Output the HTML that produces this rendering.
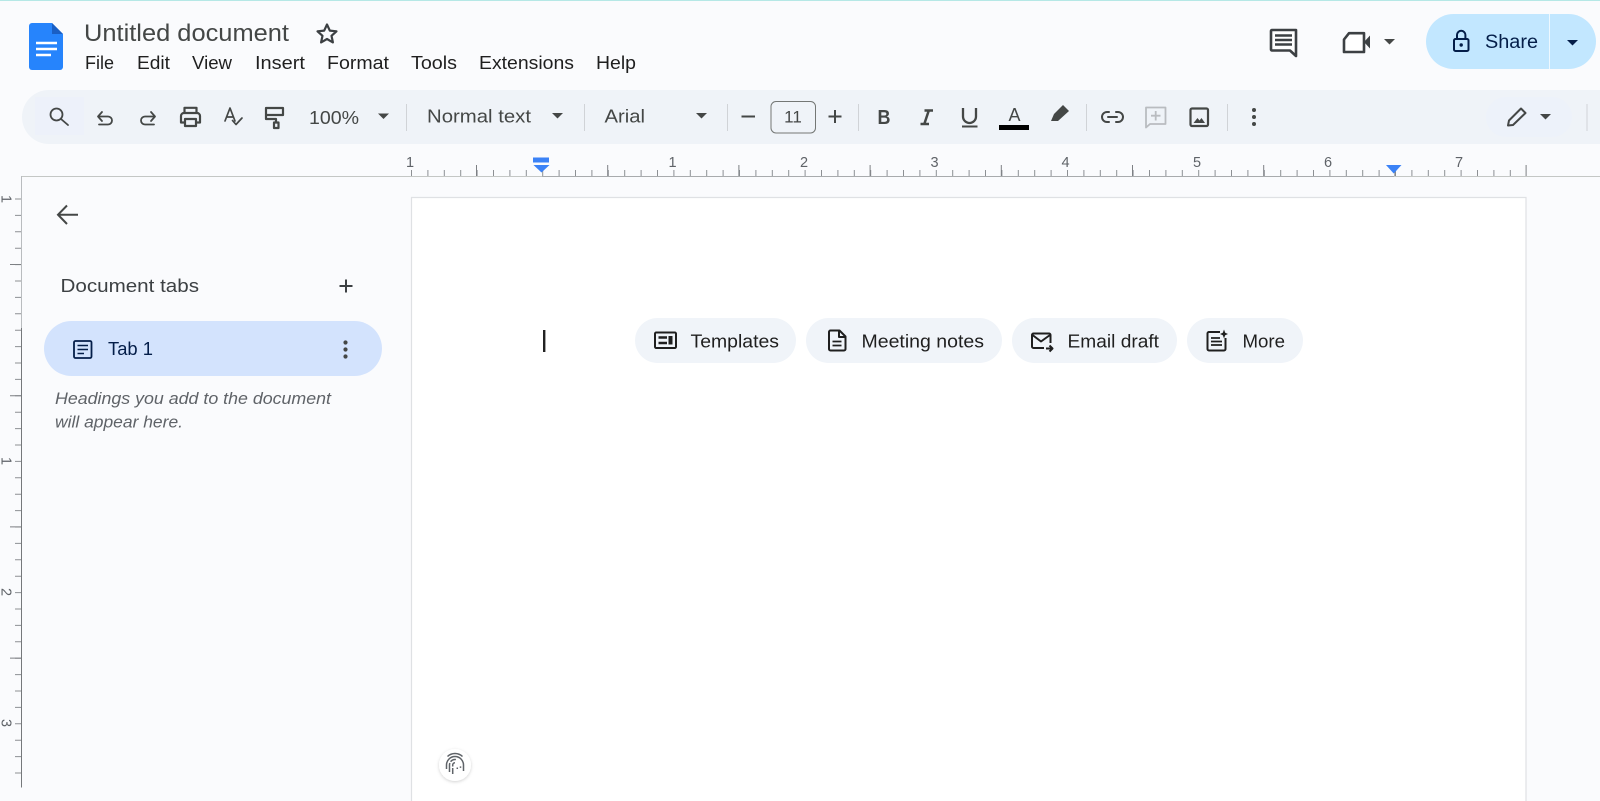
<!DOCTYPE html>
<html lang="en">
<head>
<meta charset="utf-8">
<title>Untitled document</title>
<style>
html,body{margin:0;padding:0;background:#fafbfd;width:1600px;height:801px;overflow:hidden}
svg{display:block;font-family:"Liberation Sans",Arial,sans-serif}
.m{font-size:18px;fill:#1f1f1f}
.t{font-size:18px;fill:#444746}
.c{font-size:18px;fill:#1f1f1f}
.n{font-size:14.5px;fill:#5f6368;text-anchor:middle}
.s{fill:none;stroke:#444746;stroke-width:2;stroke-linecap:round;stroke-linejoin:round}
.k{fill:none;stroke:#1f1f1f;stroke-width:2;stroke-linejoin:round}
.sep{stroke:#d0d3d7;stroke-width:1}
.car{fill:#444746}
</style>
</head>
<body>
<svg width="1600" height="801" viewBox="0 0 1600 801" xmlns="http://www.w3.org/2000/svg">
<defs><filter id="sh" x="-30%" y="-30%" width="160%" height="170%"><feDropShadow dx="0" dy="1" stdDeviation="1.5" flood-color="#000" flood-opacity=".18"/></filter></defs>
<rect width="1600" height="801" fill="#fafbfd"/>
<rect width="1600" height="1" fill="#b5e8e6"/>

<!-- Docs logo -->
<path d="M32 23H52L63 34V67a3 3 0 0 1-3 3H32a3 3 0 0 1-3-3V26a3 3 0 0 1 3-3z" fill="#2684fc"/>
<path d="M52 23L63 34H52z" fill="#1a5fc4"/>
<path d="M36 43H57M36 49H57M36 55H51" stroke="#fff" stroke-width="2.4" fill="none"/>

<!-- Title -->
<text x="84" y="41" font-size="24" fill="#444746" textLength="205" lengthAdjust="spacingAndGlyphs">Untitled document</text>
<path d="M327 24.5L329.8 30.6 336.5 31.3 331.5 35.8 332.9 42.4 327 39 321.1 42.4 322.5 35.8 317.5 31.3 324.2 30.6z" class="s" style="stroke:#3c4043;stroke-width:2.2"/>

<!-- Menu -->
<text class="m" x="85" y="69" textLength="29" lengthAdjust="spacingAndGlyphs">File</text>
<text class="m" x="137" y="69" textLength="33" lengthAdjust="spacingAndGlyphs">Edit</text>
<text class="m" x="192" y="69" textLength="40" lengthAdjust="spacingAndGlyphs">View</text>
<text class="m" x="255" y="69" textLength="50" lengthAdjust="spacingAndGlyphs">Insert</text>
<text class="m" x="327" y="69" textLength="62" lengthAdjust="spacingAndGlyphs">Format</text>
<text class="m" x="411" y="69" textLength="46" lengthAdjust="spacingAndGlyphs">Tools</text>
<text class="m" x="479" y="69" textLength="95" lengthAdjust="spacingAndGlyphs">Extensions</text>
<text class="m" x="596" y="69" textLength="40" lengthAdjust="spacingAndGlyphs">Help</text>

<!-- Header right -->
<path d="M1272 30H1296V56L1290 50.500H1272a1 1 0 0 1-1-1V31a1 1 0 0 1 1-1z" fill="#fff" stroke="#3c4043" stroke-width="2.600" stroke-linejoin="round"/>
<path d="M1275 35.500H1292M1275 40H1292M1275 44.500H1292" stroke="#3c4043" stroke-width="2.600" fill="none"/>
<path d="M1349 33.200H1364V52H1344V39.500z" fill="#fff" stroke="#3c4043" stroke-width="2.600" stroke-linejoin="round"/>
<path d="M1364 42L1370 35.500V48.500z" fill="#3c4043"/>
<path class="car" d="M1384 39H1395L1389.500 44.500z"/>
<rect x="1426" y="14" width="170" height="55" rx="27.500" fill="#c2e7ff"/>
<rect x="1549" y="14" width="1" height="55" fill="#eef8ff"/>
<rect x="1454" y="39" width="14.500" height="12" rx="1.500" fill="none" stroke="#041e49" stroke-width="2"/>
<path d="M1457 39V35a4.200 4.200 0 0 1 8.400 0V39" fill="none" stroke="#041e49" stroke-width="2"/>
<circle cx="1461.200" cy="45" r="1.700" fill="#041e49"/>
<text x="1485" y="48" font-size="19" fill="#041e49" textLength="53" lengthAdjust="spacingAndGlyphs">Share</text>
<path d="M1567 40H1578L1572.500 45.500z" fill="#041e49"/>

<!-- Toolbar -->
<path d="M49 90H1600V144H49a27 27 0 0 1 0-54z" fill="#eff3f8"/>
<rect x="35" y="97" width="49" height="38" fill="#edf1fa"/>
<circle cx="56.500" cy="114.500" r="6" class="s" style="stroke-width:1.800"/>
<path d="M61 119L68 125" class="s" style="stroke-width:1.800"/>
<path d="M102 112L98 116.500 102 121M98 116.500H108a4 4 0 0 1 0 8H99" class="s" style="stroke-width:1.800"/>
<path d="M151 112L155 116.500 151 121M155 116.500H145a4 4 0 0 0 0 8H154" class="s" style="stroke-width:1.800"/>
<path d="M184.500 113V107.800H196.500V113M184.500 122.500H181V116a3 3 0 0 1 3-3H197a3 3 0 0 1 3 3V122.500H196.500M185 119H196V126H185z" class="s" style="stroke-width:2.200"/>
<path d="M225 121L230 108 235 121M227 117H233" class="s" style="stroke-width:1.700"/>
<path d="M232.500 120.500L236 124.500 242 118" class="s" style="stroke-width:1.700"/>
<path d="M266 108H283V115H266zM266 115V119H276V122.500" class="s" style="stroke-width:2.200"/>
<rect x="274" y="122.500" width="4.500" height="5.500" class="s" style="stroke-width:2.200"/>
<text class="t" x="309" y="124" textLength="50" lengthAdjust="spacingAndGlyphs">100%</text>
<path class="car" d="M378 113.500H389L383.500 119z"/>
<path class="sep" d="M406.500 104V131"/>
<text class="t" x="427" y="122.500" textLength="104" lengthAdjust="spacingAndGlyphs">Normal text</text>
<path class="car" d="M552 113H563L557.500 118.500z"/>
<path class="sep" d="M584.500 104V131"/>
<text class="t" x="604.500" y="122.500" textLength="40.500" lengthAdjust="spacingAndGlyphs">Arial</text>
<path class="car" d="M696 113H707L701.500 118.500z"/>
<path class="sep" d="M727.500 104V131"/>
<path d="M741.500 116.500H755" stroke="#444746" stroke-width="2"/>
<rect x="771" y="101.500" width="44.500" height="31.500" rx="5" fill="none" stroke="#747775" stroke-width="1"/>
<text x="793" y="122.500" font-size="17" fill="#444746" text-anchor="middle">11</text>
<path d="M835 110V123M828.500 116.500H841.500" class="s" style="stroke-linecap:butt"/>
<path class="sep" d="M858.500 104V131"/>
<text x="884" y="124" font-size="20" font-weight="700" fill="#444746" text-anchor="middle" textLength="13" lengthAdjust="spacingAndGlyphs">B</text>
<path d="M924.500 110.500H933M928.800 110.500L924.300 124M920.500 124H929" fill="none" stroke="#444746" stroke-width="2.500"/>
<path d="M963 108V116.500a6.500 6.500 0 0 0 13 0V108" class="s" style="stroke-width:2.300;stroke-linecap:butt"/>
<path d="M962 126.500H977.500" stroke="#444746" stroke-width="2"/>
<text x="1014.500" y="121" font-size="18" fill="#444746" text-anchor="middle">A</text>
<rect x="999" y="125" width="30" height="5" fill="#000"/>
<path d="M1063 105L1069 111 1058 121H1051L1054 114z" fill="#444746"/>
<path class="sep" d="M1086.500 104V131"/>
<path d="M1109 112H1107a5 5 0 0 0 0 10H1109M1116 112H1118a5 5 0 0 1 0 10H1116M1108 117H1117" class="s"/>
<path d="M1146 107.500H1165.500V124H1150L1146 127.500z" fill="none" stroke="#b9bcc0" stroke-width="1.800" stroke-linejoin="round"/>
<path d="M1155.700 111V120.500M1151 115.700H1160.500" stroke="#b9bcc0" stroke-width="1.800"/>
<rect x="1190.500" y="108.500" width="17.500" height="17.500" rx="1.500" fill="none" stroke="#444746" stroke-width="2.200"/>
<path d="M1193.500 123L1197.500 118 1199.500 120.500 1201.500 118 1205 123z" fill="#444746"/>
<path class="sep" d="M1227.500 104V131"/>
<circle cx="1254" cy="110" r="2" fill="#444746"/><circle cx="1254" cy="117" r="2" fill="#444746"/><circle cx="1254" cy="124" r="2" fill="#444746"/>
<rect x="1486" y="97" width="86" height="40" rx="20" fill="#edf2fa"/>
<path d="M1508 125.500L1509 120.500 1521 108.500 1525.500 113 1513 125z" class="s"/>
<path class="car" d="M1540 114H1551L1545.500 119.500z"/>
<path class="sep" d="M1587 104V131"/>

<!-- Horizontal ruler -->
<path d="M22 176.500H1600" stroke="#c4c7c5" stroke-width="1"/>
<path d="M542 176.500H1394" stroke="#a8abad" stroke-width="1"/>
<path d="M411 173H1526" stroke="#8d9094" stroke-width="6" stroke-dasharray="1 15.400" fill="none"/>
<path d="M476 170.500H1530" stroke="#7d8084" stroke-width="11" stroke-dasharray="1 130.200" fill="none"/>
<text class="n" x="410" y="167">1</text>
<text class="n" x="672.500" y="167">1</text>
<text class="n" x="804" y="167">2</text>
<text class="n" x="934.500" y="167">3</text>
<text class="n" x="1065.500" y="167">4</text>
<text class="n" x="1197" y="167">5</text>
<text class="n" x="1328" y="167">6</text>
<text class="n" x="1459" y="167">7</text>
<rect x="533" y="157.500" width="16" height="5" fill="#3b82f6"/>
<path d="M533.500 165H549.500L541.500 172.500z" fill="#3b82f6"/>
<path d="M1386 165H1401.500L1393.700 173.500z" fill="#3b82f6"/>

<!-- Vertical ruler -->
<path d="M21.500 176V328" stroke="#b9bcbf" stroke-width="1"/>
<path d="M21.500 328V787.500" stroke="#75787b" stroke-width="1"/>
<path d="M18 198.500V787" stroke="#8d9094" stroke-width="6" stroke-dasharray="1 15.400" fill="none"/>
<path d="M15.500 264V787" stroke="#7d8084" stroke-width="11" stroke-dasharray="1 130.200" fill="none"/>
<text class="n" transform="translate(1.500,199) rotate(90)">1</text>
<text class="n" transform="translate(1.500,461) rotate(90)">1</text>
<text class="n" transform="translate(1.500,592) rotate(90)">2</text>
<text class="n" transform="translate(1.500,723) rotate(90)">3</text>

<!-- Page -->
<path d="M411.500 801V197.500H1526V801" fill="#fff" stroke="#dfe1e4" stroke-width="1.200"/>

<!-- Sidebar -->
<path d="M78 214.700H58.500M67 205.500L58 214.700 67 224" fill="none" stroke="#444746" stroke-width="2"/>
<text x="60.500" y="292" font-size="18" fill="#3c4043" textLength="138.500" lengthAdjust="spacingAndGlyphs">Document tabs</text>
<path d="M346 279.500V292.500M339.500 286H352.500" stroke="#3c4043" stroke-width="2" fill="none"/>
<rect x="44" y="321" width="338" height="55" rx="27.500" fill="#d3e3fd"/>
<rect x="74" y="341" width="17.500" height="17" rx="1.500" fill="none" stroke="#041e49" stroke-width="1.800"/>
<path d="M77.500 345.500H88M77.500 349.500H88M77.500 353.500H84" stroke="#041e49" stroke-width="1.600" fill="none"/>
<text x="108" y="355" font-size="18" fill="#041e49" textLength="45" lengthAdjust="spacingAndGlyphs">Tab 1</text>
<circle cx="345.500" cy="342.500" r="2.100" fill="#444746"/><circle cx="345.500" cy="349.500" r="2.100" fill="#444746"/><circle cx="345.500" cy="356.500" r="2.100" fill="#444746"/>
<text x="55" y="404" font-size="17" font-style="italic" fill="#5f6368" textLength="276" lengthAdjust="spacingAndGlyphs">Headings you add to the document</text>
<text x="55" y="427.500" font-size="17" font-style="italic" fill="#5f6368" textLength="128" lengthAdjust="spacingAndGlyphs">will appear here.</text>

<!-- Cursor -->
<rect x="543" y="330" width="2.400" height="22" fill="#222"/>

<!-- Chips -->
<rect x="635" y="318" width="161" height="45" rx="22.500" fill="#f0f4f9"/>
<rect x="806" y="318" width="196" height="45" rx="22.500" fill="#f0f4f9"/>
<rect x="1012" y="318" width="165" height="45" rx="22.500" fill="#f0f4f9"/>
<rect x="1187" y="318" width="116" height="45" rx="22.500" fill="#f0f4f9"/>

<rect x="655" y="332.500" width="21" height="15.500" rx="1.200" class="k"/>
<path d="M658.500 337.500H667M658.500 343H667" stroke="#1f1f1f" stroke-width="2.600" fill="none"/>
<rect x="668.500" y="336" width="4" height="8.500" fill="#1f1f1f"/>
<text class="c" x="690.500" y="347.500" textLength="88.500" lengthAdjust="spacingAndGlyphs">Templates</text>

<path d="M830.500 330.500H839.500L845.500 336.500V349a1.500 1.500 0 0 1-1.500 1.500H830.500A1.500 1.500 0 0 1 829 349V332a1.500 1.500 0 0 1 1.500-1.500zM839 331V337H845" class="k"/>
<path d="M832.500 341.500H841.500M832.500 345.500H841.500" stroke="#1f1f1f" stroke-width="1.800" fill="none"/>
<text class="c" x="861.500" y="347.500" textLength="122.500" lengthAdjust="spacingAndGlyphs">Meeting notes</text>

<path d="M1044 348H1033.500A1.500 1.500 0 0 1 1032 346.500V335a1.500 1.500 0 0 1 1.500-1.500H1049a1.500 1.500 0 0 1 1.500 1.500V343M1032.500 335L1041 341.500 1050 335" class="k"/>
<path d="M1046 348.500H1052M1049.500 345.500L1052.500 348.500 1049.500 351.500" class="k"/>
<text class="c" x="1067.500" y="347.500" textLength="91.500" lengthAdjust="spacingAndGlyphs">Email draft</text>

<path d="M1220 332H1209a1.500 1.500 0 0 0-1.500 1.500V349a1.500 1.500 0 0 0 1.500 1.500H1224a1.500 1.500 0 0 0 1.500-1.500V338" class="k"/>
<path d="M1211 338H1220M1211 341.500H1222M1211 345H1222" stroke="#1f1f1f" stroke-width="1.700" fill="none"/>
<path d="M1224 329.500L1225.200 332.800 1228 334 1225.200 335.200 1224 338.500 1222.800 335.200 1220 334 1222.800 332.800z" fill="#1f1f1f"/>
<text class="c" x="1242.500" y="347.500" textLength="42.500" lengthAdjust="spacingAndGlyphs">More</text>

<!-- Fingerprint -->
<circle cx="455" cy="765" r="16" fill="#fff" filter="url(#sh)"/>
<g fill="none" stroke="#5f6368" stroke-width="1.500">
<path d="M446.500 769V765a8.500 8.500 0 0 1 17 0V771"/>
<path d="M449.500 772V765a5.500 5.500 0 0 1 11 0V773" stroke-dasharray="9 1.500 6"/>
<path d="M452.700 774V765a2.300 2.300 0 0 1 4.600 0V774" stroke-dasharray="6 1.500 5"/>
<path d="M447.500 756.500a11 11 0 0 1 15 0"/>
</g>
</svg>
</body>
</html>
